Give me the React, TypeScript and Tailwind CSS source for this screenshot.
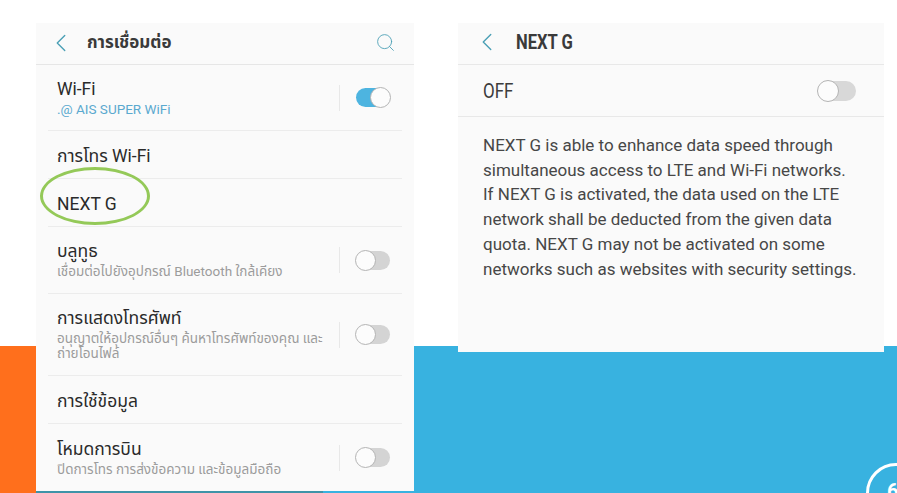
import { ChevronLeft, Search } from "lucide-react";

const font = "font-['Roboto','Noto_Sans','Noto_Sans_Thai','sans-serif']";

function Toggle({ on = false }: { on?: boolean }) {
  return (
    <div className="flex items-center h-[30px] mr-[2px]">
      <div className="w-px h-[26px] bg-[#e8e8e8] mr-[16px]" />
      <div className={`relative w-[34px] h-[19px] rounded-full ${on ? "bg-[#4db4e0]" : "bg-[#d4d4d4]"}`}>
        <div
          className={`absolute top-[-1px] w-[21px] h-[21px] rounded-full bg-[#fcfcfc] border border-[#b4b4b4] ${
            on ? "right-[-1px]" : "left-[-1px]"
          }`}
        />
      </div>
    </div>
  );
}

function Row({
  title,
  sub,
  subBlue,
  toggle,
  on,
  heightClass,
  last,
}: {
  title: string;
  sub?: string;
  subBlue?: boolean;
  toggle?: boolean;
  on?: boolean;
  heightClass: string;
  last?: boolean;
}) {
  return (
    <div className={`mx-[12px] pl-[9px] pr-[10px] flex items-center ${heightClass} ${last ? "" : "border-b border-[#ececec]"}`}>
      <div className={`flex-1 min-w-0 pr-[13px] ${sub ? "" : "pt-[3px]"}`}>
        <div className="text-[17.5px] leading-[20px] text-[#2a2a2a]">{title}</div>
        {sub && (
          <div className={`text-[13.5px] leading-[15px] mt-[3px] ${subBlue ? "text-[#5aa9cf]" : "text-[#9c9c9c]"}`}>
            {sub}
          </div>
        )}
      </div>
      {toggle && <Toggle on={on} />}
    </div>
  );
}

export default function App() {
  return (
    <div className={`relative w-[897px] h-[493px] overflow-hidden bg-white ${font}`}>
      {/* slide background */}
      <div className="absolute left-0 right-0 bottom-0 h-[147px] flex">
        <div className="w-[36px] bg-[#ff6f1c]" />
        <div className="flex-1 bg-[#38b2e0]" />
      </div>
      <div className="absolute left-[36px] bottom-0 w-[287px] h-[2px] bg-[#3e93a8]" />

      <div className="relative flex items-start pt-[23px] pl-[36px] gap-[44px]">
        {/* connections list */}
        <div className="w-[378px] h-[468px] bg-[#fafafa]">
          <div className="h-[42px] flex items-center pl-[10px] pr-[18px] pb-[2px] border-b border-[#e6e6e6]">
            <ChevronLeft size={30} strokeWidth={1.1} className="text-[#4a9fb5]" />
            <div className="ml-[11px] flex-1 text-[17px] font-bold text-[#3a3a3a]">การเชื่อมต่อ</div>
            <Search size={21} strokeWidth={1} className="text-[#4a9fb5]" />
          </div>
          <Row title="Wi-Fi" sub=".@ AIS SUPER WiFi" subBlue toggle on heightClass="h-[66px]" />
          <Row title="การโทร Wi-Fi" heightClass="h-[48px]" />
          <Row title="NEXT G" heightClass="h-[48px]" />
          <Row title="บลูทูธ" sub="เชื่อมต่อไปยังอุปกรณ์ Bluetooth ใกล้เคียง" toggle heightClass="h-[67px]" />
          <Row
            title="การแสดงโทรศัพท์"
            sub="อนุญาตให้อุปกรณ์อื่นๆ ค้นหาโทรศัพท์ของคุณ และถ่ายโอนไฟล์"
            toggle
            heightClass="h-[82px]"
          />
          <Row title="การใช้ข้อมูล" heightClass="h-[48px]" />
          <Row title="โหมดการบิน" sub="ปิดการโทร การส่งข้อความ และข้อมูลมือถือ" toggle heightClass="h-[67px]" last />
        </div>

        {/* NEXT G detail */}
        <div className="w-[426px] h-[329px] bg-[#fafafa]">
          <div className="h-[42px] flex items-center pl-[14px] pb-[3px] border-b border-[#e8e8e8]">
            <ChevronLeft size={30} strokeWidth={1.1} className="text-[#4a9fb5]" />
            <div className="ml-[14px] text-[20px] font-bold origin-left scale-x-[0.83] text-[#3a3a3a]">NEXT G</div>
          </div>
          <div className="h-[52px] flex items-center justify-between pl-[25px] pr-[28px] border-b border-[#e8e8e8]">
            <div className="text-[20px] origin-left scale-x-[0.85] text-[#3c3c3c]">OFF</div>
            <div className="relative w-[38px] h-[20px] rounded-full bg-[#d8d8d8]">
              <div className="absolute top-[-1px] left-[-1px] w-[22px] h-[22px] rounded-full bg-[#fcfcfc] border border-[#b4b4b4]" />
            </div>
          </div>
          <p className="pt-[16px] pl-[25px] pr-[27px] text-[17px] leading-[24.7px] text-[#474747]">
            NEXT G is able to enhance data speed through simultaneous access to LTE and Wi-Fi networks. If NEXT G is
            activated, the data used on the LTE network shall be deducted from the given data quota. NEXT G may not be
            activated on some networks such as websites with security settings.
          </p>
        </div>
      </div>

      {/* highlight ring around NEXT G */}
      <div className="absolute left-[40px] top-[167px] w-[110px] h-[58px] rounded-[50%] border-[3px] border-[#94c958]" />

      {/* page number badge */}
      <div className="absolute left-[866px] top-[463px] w-[60px] h-[60px] rounded-full border-[3px] border-white pl-[18px] pt-[10px] text-[20px] font-bold text-white">
        6
      </div>
    </div>
  );
}
